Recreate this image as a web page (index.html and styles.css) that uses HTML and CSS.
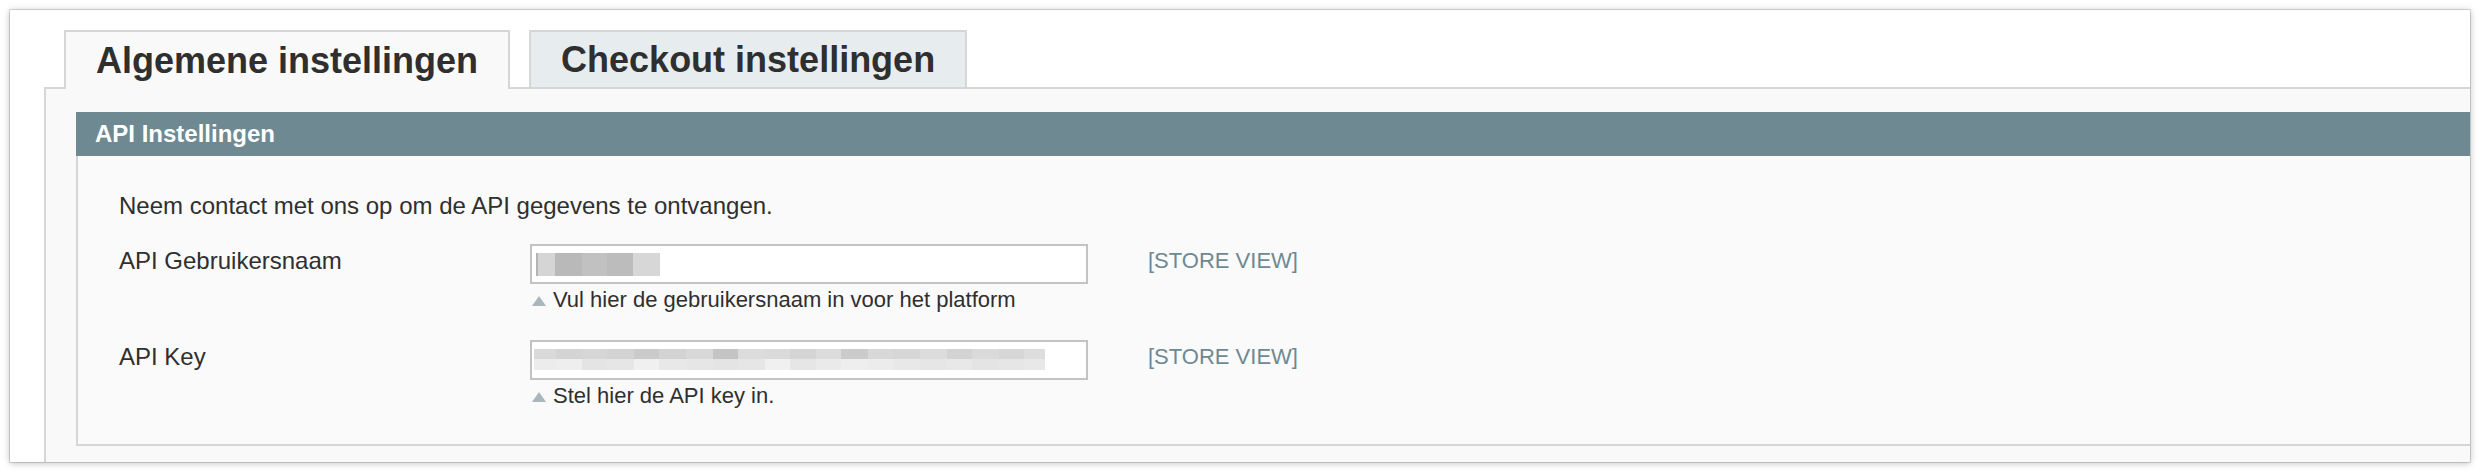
FILE: index.html
```html
<!DOCTYPE html>
<html lang="nl">
<head>
<meta charset="utf-8">
<title>API Instellingen</title>
<link rel="stylesheet" href="styles.css">
</head>
<body>
<div class="window">
  <div class="tabs">
    <div class="tab tab-active">Algemene instellingen</div>
    <div class="tab tab-inactive">Checkout instellingen</div>
  </div>
  <div class="panel">
    <div class="section-head">API Instellingen</div>
    <div class="section-body">
      <p class="intro">Neem contact met ons op om de API gegevens te ontvangen.</p>
      <div class="form-grid">
        <div class="label">API Gebruikersnaam</div>
        <div class="field">
          <div class="input"><span class="redact redact-user"></span></div>
          <div class="hint"><span class="hint-arrow"></span>Vul hier de gebruikersnaam in voor het platform</div>
        </div>
        <div class="scope">[STORE VIEW]</div>

        <div class="label">API Key</div>
        <div class="field">
          <div class="input"><span class="redact redact-key"></span></div>
          <div class="hint"><span class="hint-arrow"></span>Stel hier de API key in.</div>
        </div>
        <div class="scope">[STORE VIEW]</div>
      </div>
    </div>
  </div>
</div>
</body>
</html>
```

FILE: styles.css
```css
html, body {
  margin: 0;
  padding: 0;
  background: #ffffff;
}

body {
  font-family: "Liberation Sans", Arial, Helvetica, sans-serif;
  color: #2f2f2f;
}

.window {
  margin: 10px;
  width: 2460px;
  height: 452px;
  box-sizing: border-box;
  background: #ffffff;
  overflow: hidden;
  box-shadow: 0 0 0 1px rgba(0, 0, 0, 0.13), 0 1px 7px rgba(0, 0, 0, 0.28);
  padding: 20px 0 0 34px;
  display: flex;
  flex-direction: column;
}

.tabs {
  display: flex;
  align-items: flex-start;
  gap: 19px;
  margin-left: 20px;
  position: relative;
  z-index: 1;
  margin-bottom: -2px;
}

.tab {
  box-sizing: border-box;
  padding: 0 30px;
  border: 2px solid #d6d6d6;
  border-bottom: none;
  font-size: 36px;
  font-weight: bold;
  color: #2f2f2f;
  display: flex;
  align-items: center;
  white-space: nowrap;
}

.tab-active {
  height: 59px;
  background: #f9f9f9;
}

.tab-inactive {
  height: 57px;
  background: #e7edef;
}

.panel {
  flex: 1;
  background: #f9f9f9;
  border-top: 2px solid #d6d6d6;
  border-left: 2px solid #d6d6d6;
  padding: 23px 0 0 30px;
}

.section-head {
  height: 44px;
  box-sizing: border-box;
  background: #6f8992;
  color: #ffffff;
  font-size: 24px;
  font-weight: bold;
  padding-left: 19px;
  display: flex;
  align-items: center;
}

.section-body {
  background: #fafafa;
  border-left: 2px solid #d6d6d6;
  border-bottom: 2px solid #d6d6d6;
  padding: 35px 0 35px 41px;
}

.intro {
  margin: 0 0 23px 0;
  font-size: 24px;
  line-height: 30px;
  color: #2f2f2f;
}

.form-grid {
  display: grid;
  grid-template-columns: 411px 558px auto;
  column-gap: 0;
  row-gap: 27px;
  align-items: start;
}

.label {
  font-size: 24px;
  line-height: 30px;
  padding-top: 2px;
  color: #2f2f2f;
}

.field {
  display: flex;
  flex-direction: column;
}

.input {
  box-sizing: border-box;
  height: 40px;
  width: 558px;
  background: #ffffff;
  border: 2px solid #c3c3c3;
  padding: 7px 0 0 4px;
}

.redact {
  display: block;
}

.redact-user {
  width: 124px;
  height: 23px;
  background: linear-gradient(to right,
    #b4b4b4 0 2px,
    #d5d5d5 2px 19px,
    #b9b9b9 19px 46px,
    #c1c1c1 46px 71px,
    #bcbcbc 71px 97px,
    #d7d7d7 97px 124px);
}

.redact-key {
  margin-left: -2px;
  width: 511px;
  height: 21px;
  background-image:
    linear-gradient(to right,
      #d9d9d9 0 22px, #d4d4d4 22px 48px, #d6d6d6 48px 73px, #d3d3d3 73px 100px,
      #cbcbcb 100px 125px, #d3d3d3 125px 152px, #d8d8d8 152px 179px, #c4c4c4 179px 204px,
      #dcdcdc 204px 231px, #dadada 231px 256px, #d5d5d5 256px 282px, #dcdcdc 282px 307px,
      #cbcbcb 307px 334px, #d8d8d8 334px 359px, #d6d6d6 359px 386px, #dcdcdc 386px 413px,
      #d3d3d3 413px 438px, #dadada 438px 465px, #d6d6d6 465px 490px, #dddddd 490px 511px),
    linear-gradient(to right,
      #ececec 0 22px, #eeeeee 22px 48px, #e4e4e4 48px 73px, #e6e6e6 73px 100px,
      #f0f0f0 100px 125px, #e8e8e8 125px 152px, #e6e6e6 152px 179px, #e4e4e4 179px 204px,
      #e6e6e6 204px 231px, #f0f0f0 231px 256px, #e6e6e6 256px 282px, #eaeaea 282px 307px,
      #eeeeee 307px 334px, #ececec 334px 359px, #e8e8e8 359px 386px, #e6e6e6 386px 413px,
      #e8e8e8 413px 438px, #e4e4e4 438px 465px, #e6e6e6 465px 490px, #e8e8e8 490px 511px);
  background-size: 511px 10px, 511px 11px;
  background-position: 0 0, 0 10px;
  background-repeat: no-repeat;
}

.hint {
  margin-top: 3px;
  font-size: 22px;
  line-height: 26px;
  color: #2f2f2f;
  display: flex;
  align-items: center;
  padding-left: 2px;
}

.hint-arrow {
  display: inline-block;
  width: 0;
  height: 0;
  border-left: 7px solid transparent;
  border-right: 7px solid transparent;
  border-bottom: 10px solid #a9b7bd;
  margin-right: 7px;
  margin-top: 1px;
}

.scope {
  font-size: 22px;
  line-height: 26px;
  padding-top: 4px;
  padding-left: 60px;
  color: #6f8992;
  white-space: nowrap;
}
```
